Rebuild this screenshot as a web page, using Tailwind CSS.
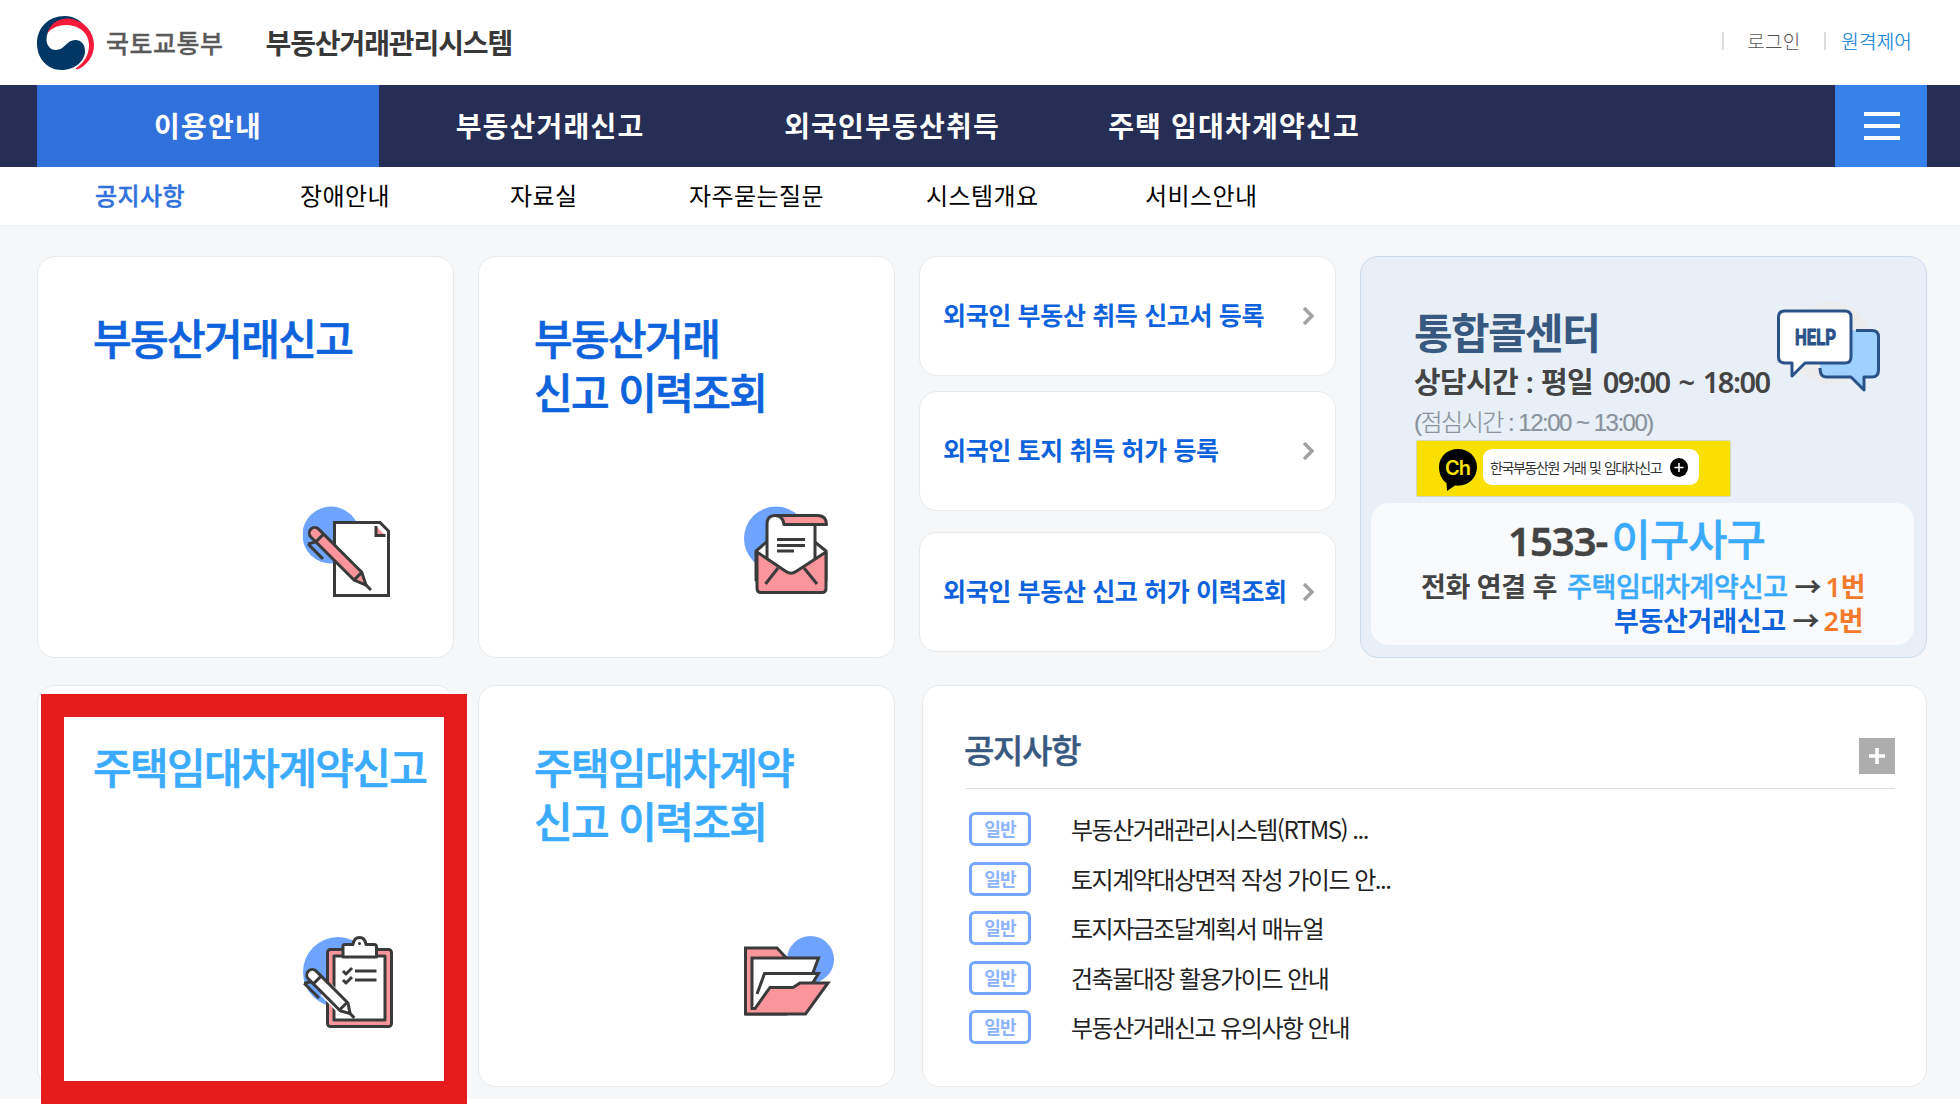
<!DOCTYPE html>
<html lang="ko">
<head>
<meta charset="utf-8">
<title>부동산거래관리시스템</title>
<script src="https://cdn.jsdelivr.net/npm/@tailwindcss/browser@4"></script>
</head>
<body class="bg-white font-['Noto_Sans_CJK_KR',sans-serif] w-[1960px] h-[1104px] overflow-hidden whitespace-nowrap">

<header class="h-[85px] flex items-start pl-[37px] pr-[48px]">
  <svg class="mt-[16px] w-[57px] h-[54px] shrink-0" viewBox="37 16 57 54" preserveAspectRatio="none">
    <path d="M65 16C48 16 37 28 37 43.500S48 70 61.500 70C76 70 85 60 85 51C85 44 81 40 75.500 40C66 40 65 50 56 50C50 50 46.500 45 46.500 39.500C46.500 29 55 21 66 19.500C74 19 81 23 85.500 27.500C81 20 73 16 65 16Z" fill="#003764"/>
    <path d="M47 34C51 21 61 18 69 18.500C84 20 94 32 94 45C94 56 87 66 77 69.500L75.500 68.500C84 63 89 55 89 45C89 34 80 25 66 25C57 25 50 29 47 34Z" fill="#f5193a"/>
  </svg>
  <span class="ml-[12px] mt-[25px] text-[25px] leading-[34px] font-medium tracking-[0.5px] text-[#5a5a5a] [-webkit-text-stroke:0.3px]">국토교통부</span>
  <h1 class="ml-[42px] mt-[25px] text-[28px] leading-[34px] font-bold tracking-[-1.1px] text-[#383838]">부동산거래관리시스템</h1>
  <div class="ml-auto mt-[28px] flex items-center h-[26px] text-[19px] leading-[26px] font-light tracking-[0.2px]">
    <span class="w-[2px] h-[18px] bg-[#ddd]"></span>
    <a class="ml-[23px] w-[77px] text-[#555]">로그인</a>
    <span class="w-[2px] h-[18px] bg-[#ddd]"></span>
    <a class="ml-[15px] text-[#0c83d3] [-webkit-text-stroke:0.2px]">원격제어</a>
  </div>
</header>

<nav class="h-[82px] bg-[#262e55] pl-[37px] pr-[33px] flex text-white text-[28px] leading-[81px] font-bold tracking-[1.2px] text-center">
  <a class="w-[342px] bg-[#3171dc]">이용안내</a>
  <a class="w-[342px]">부동산거래신고</a>
  <a class="w-[342px]">외국인부동산취득</a>
  <a class="w-[342px]">주택 임대차계약신고</a>
  <button class="ml-auto w-[92px] pl-[1px] bg-[#3482ea] flex flex-col items-center justify-center gap-[7.500px]">
    <span class="w-[36px] h-[4.500px] bg-white"></span>
    <span class="w-[36px] h-[4.500px] bg-white"></span>
    <span class="w-[36px] h-[4.500px] bg-white"></span>
  </button>
</nav>

<div class="h-[59px] border-b border-[#eceef0] pl-[95px] flex text-[24px] leading-[55px] tracking-[0.4px] text-black">
  <a class="w-[205px] text-[#3171dc] font-medium [-webkit-text-stroke:0.4px]">공지사항</a>
  <a class="w-[210px]">장애안내</a>
  <a class="w-[179px]">자료실</a>
  <a class="w-[237px]">자주묻는질문</a>
  <a class="w-[219px]">시스템개요</a>
  <a>서비스안내</a>
</div>

<main class="h-[873px] bg-[#f5f7f9] pl-[37px] pr-[33px] pt-[30px] grid grid-cols-[417px_417px_417px_567px] grid-rows-[402px_402px] gap-x-[24px] gap-y-[27px]">

  <section class="bg-white border border-[#e8e9eb] rounded-[18px] pl-[55px] pt-[53px] flex flex-col">
    <h2 class="h-[196px] text-[42px] leading-[54px] font-medium [-webkit-text-stroke:0.7px] tracking-[-1.6px] text-[#0e63dc]">부동산거래신고</h2>
    <svg class="ml-[210px] w-[92px] h-[94px]" viewBox="303 506 92 94" fill="none" stroke="#3a3a3a" stroke-width="3">
      <circle cx="331" cy="535" r="28.500" fill="#6ea3ff" stroke="none"/>
      <path d="M334.500 522.500H380L388.500 531V595.500H334.500Z" fill="#fff"/>
      <path d="M376 526V535.500H385.500" fill="#fb959c"/>
      <g transform="translate(313 532) rotate(45)">
        <path d="M6 5H63L75 0L63 -6H2A5.500 5.500 0 0 0 2 5Z" fill="#fb959c"/>
        <path d="M9 -6V5M63 -6V5M75 0H82M9 5L5 12M5 12H26"/>
      </g>
    </svg>
  </section>

  <section class="bg-white border border-[#e8e9eb] rounded-[18px] pl-[55px] pt-[53px] flex flex-col">
    <h2 class="h-[196px] text-[42px] leading-[54px] font-medium [-webkit-text-stroke:0.7px] tracking-[-1.6px] text-[#0e63dc]">부동산거래<br>신고 이력조회</h2>
    <svg class="ml-[210px] w-[88px] h-[92px]" viewBox="744 506 88 92" fill="none" stroke="#3a3a3a" stroke-width="3" stroke-linejoin="round">
      <circle cx="776" cy="538.500" r="32" fill="#6ea3ff" stroke="none"/>
      <path d="M756 551L790 522L826 551V580H756Z" fill="#fff"/>
      <path d="M767 560V524Q767 515.500 775 515.500H815V565L792 576Z" fill="#fff"/>
      <path d="M775 515.500H818Q826.500 516 826.500 524.500H784Q783 515.500 775 515.500Z" fill="#fb959c"/>
      <path d="M757 552L786 571.500Q791 575 796 571.500L826 552V588Q826 592.500 822 592.500H761Q757 592.500 757 588Z" fill="#fb959c"/>
      <path d="M778 568L765.500 584M804 568L817 584M777 539.500H805M777 545.500H805M777 551H794"/>
    </svg>
  </section>

  <div class="flex flex-col text-[25px] leading-[34px] font-bold tracking-[-0.35px] text-[#0e63dc]">
    <a class="h-[120px] bg-white border border-[#e8e9eb] rounded-[18px] pl-[23px] pr-[21px] flex items-center justify-between"><span class="-mt-[4px]">외국인 부동산 취득 신고서 등록</span>
      <svg class="w-[11px] h-[18px]" viewBox="0 0 11 18" fill="none" stroke="#a2a2a2" stroke-width="3.500"><path d="M1 1L9 9L1 17"/></svg></a>
    <a class="mt-[15px] h-[120px] bg-white border border-[#e8e9eb] rounded-[18px] pl-[23px] pr-[21px] flex items-center justify-between"><span class="-mt-[4px]">외국인 토지 취득 허가 등록</span>
      <svg class="w-[11px] h-[18px]" viewBox="0 0 11 18" fill="none" stroke="#a2a2a2" stroke-width="3.500"><path d="M1 1L9 9L1 17"/></svg></a>
    <a class="mt-[21px] h-[120px] bg-white border border-[#e8e9eb] rounded-[18px] pl-[23px] pr-[21px] flex items-center justify-between"><span class="-mt-[4px]">외국인 부동산 신고 허가 이력조회</span>
      <svg class="w-[11px] h-[18px]" viewBox="0 0 11 18" fill="none" stroke="#a2a2a2" stroke-width="3.500"><path d="M1 1L9 9L1 17"/></svg></a>
  </div>

  <section class="bg-[#e8eff7] border border-[#cbdbec] rounded-[18px] px-[10px] pt-[41px]">
    <div class="flex pl-[43px] h-[141px]">
      <div class="w-[362px] pt-[6px]">
        <h2 class="text-[42px] leading-[54px] font-bold tracking-[-1.6px] text-[#38597f]">통합콜센터</h2>
        <p class="pt-[4px] text-[29px] leading-[40px] h-[45px] font-semibold font-['Noto_Sans','Noto_Sans_CJK_KR',sans-serif] tracking-[-0.7px] [word-spacing:1px] text-[#444]">상담시간 : 평일 <span class="ml-[2px] tracking-[-1.5px] [word-spacing:3px]">09:00 ~ 18:00</span></p>
        <p class="pt-[1px] text-[24px] leading-[38px] font-light font-['Liberation_Sans','Noto_Sans_CJK_KR',sans-serif] tracking-[-1.5px] text-[#8a929b] [-webkit-text-stroke:0.2px]">(점심시간 : 12:00 ~ 13:00)</p>
      </div>
      <svg class="w-[106px] h-[96px]" viewBox="1776 298 106 96" stroke="#2a5288" stroke-width="3" stroke-linejoin="round">
        <circle cx="1830" cy="343" r="41.500" fill="#ececec" stroke="none"/>
        <path d="M1820 330H1873Q1878.500 330 1878.500 336V370Q1878.500 377 1872 377H1864L1864 390L1851 377H1826Q1820 377 1820 371Z" fill="#9fd1ff" stroke="none"/>
        <path d="M1856 330.500H1872Q1878.500 330.500 1878.500 337V370Q1878.500 377 1872 377H1864V390L1851 377H1826Q1820 377 1820 368" fill="none"/>
        <path d="M1785 311H1845Q1851 311 1851 317V357Q1851 363 1845 363H1805L1792 376V363H1785Q1778.500 363 1778.500 357V317Q1778.500 311 1785 311Z" fill="#fff"/>
        <text x="1795" y="344.500" font-family="Roboto" font-weight="700" font-size="22" textLength="41" lengthAdjust="spacingAndGlyphs" fill="#2a5288" stroke-width="1">HELP</text>
      </svg>
    </div>
    <div class="ml-[45px] mt-[1px] w-[315px] h-[57px] bg-[#f9e000] border border-[#d5d7bd] rounded-[2px] flex items-start pl-[21px] pt-[8px]">
      <svg class="w-[40px] h-[42px]" viewBox="0 0 40 42"><path d="M20 0C9 0 1 8 1 18C1 25 4 31 8.500 34L9 42L17 36.500C30 38 39 29 39 18C39 8 31 0 20 0Z" fill="#000"/><text x="20" y="26" text-anchor="middle" font-family="Inter" font-weight="600" font-size="20" fill="#f9e000" textLength="26">Ch</text></svg>
      <div class="ml-[5px] w-[216px] h-[36px] rounded-[9px] bg-white flex items-center pl-[7px] text-[14px] leading-[20px] tracking-[-1.4px] [word-spacing:1px] text-[#333]"><span class="w-[180px]">한국부동산원 거래 및 임대차신고</span>
        <svg class="w-[18px] h-[19px]" viewBox="0 0 18 19"><ellipse cx="9" cy="9.500" rx="9" ry="9.500" fill="#000"/><path d="M4.500 9.500H13.500M9 5V14" stroke="#fff" stroke-width="1.500"/></svg></div>
    </div>
    <div class="mt-[6px] h-[142px] w-[543px] rounded-[18px] bg-[#f9fafc] pt-[8px] font-semibold font-['Noto_Sans','Noto_Sans_CJK_KR',sans-serif] text-[#444]">
      <p class="pl-[137px] h-[59px] text-[40px] leading-[58px] tracking-[-1px]"><span class="[-webkit-text-stroke:0.5px]">1533-</span><span class="ml-[4px] text-[43px] tracking-[-1.2px] font-medium text-[#3aabff] [-webkit-text-stroke:0.3px]">이구사구</span></p>
      <p class="pl-[50px] h-[34px] text-[27px] leading-[34px] tracking-[-0.3px]">전화 연결 후 <span class="ml-[3px] font-medium text-[#3aabff] [-webkit-text-stroke:0.5px]">주택임대차계약신고</span> <span class="tracking-[-1.5px]">→ </span><span class="text-[#f47b2c]">1번</span></p>
      <p class="pl-[243px] h-[34px] text-[27px] leading-[34px] tracking-[-0.3px]"><span class="text-[#0e63dc]">부동산거래신고</span> <span class="tracking-[-1.5px]">→ </span><span class="text-[#f47b2c]">2번</span></p>
    </div>
  </section>

  <section class="relative bg-white border border-[#e8e9eb] rounded-[18px] pl-[55px] pt-[53px] flex flex-col">
    <h2 class="h-[197px] text-[42px] leading-[54px] font-medium [-webkit-text-stroke:0.7px] tracking-[-1.6px] text-[#3aabff]">주택임대차계약신고</h2>
    <svg class="ml-[210px] w-[92px] h-[94px]" viewBox="303 936 92 94" fill="none" stroke="#3a3a3a" stroke-width="3" stroke-linejoin="round">
      <circle cx="338" cy="972" r="35" fill="#6ea3ff" stroke="none"/>
      <rect x="327.500" y="949.500" width="64" height="77" rx="3" fill="#fb959c"/>
      <rect x="334" y="956" width="51" height="64" fill="#fff"/>
      <path d="M343 957V946Q343 944.500 345 944.500H353Q354 937.500 359.500 937.500T366 944.500H374Q376.500 944.500 376.500 947V957Z" fill="#fff"/>
      <circle cx="359.500" cy="943.500" r="1.500" fill="#3a3a3a" stroke="none"/>
      <path d="M355 971H376.500M355 980H376.500"/>
      <path d="M343 971L346 974L352 968M343 980L346 983L352 977"/>
      <g transform="translate(310.500 974) rotate(45)">
        <path d="M22 8H47L60 0L47 -8H22Z" fill="#fff" stroke="none"/>
        <path d="M4 5H47L56 0L47 -6H2A5.500 5.500 0 0 0 2 5Z" fill="#fff"/>
        <path d="M9 -6V5M46 -6V5M56 0H62M6 5L2 11M2 11H23"/>
      </g>
    </svg>
    <div class="absolute left-[3px] top-[8px] w-[426px] h-[410px] border-[23px] border-[#e61c1c]"></div>
  </section>

  <section class="bg-white border border-[#e8e9eb] rounded-[18px] pl-[55px] pt-[53px] flex flex-col">
    <h2 class="h-[197px] text-[42px] leading-[54px] font-medium [-webkit-text-stroke:0.7px] tracking-[-1.6px] text-[#3aabff]">주택임대차계약<br>신고 이력조회</h2>
    <svg class="ml-[210px] w-[92px] h-[94px]" viewBox="744 936 92 94" fill="none" stroke="#3a3a3a" stroke-width="3">
      <circle cx="810.500" cy="959.500" r="23.500" fill="#6ea3ff" stroke="none"/>
      <path d="M745.500 948H777L786 957.500V1014H745.500Z" fill="#fb959c"/>
      <path d="M752 1008.500V958H818.500L811 978L800 985L756 1009Z" fill="#fff"/>
      <path d="M764.500 973.500H818.500L812 984L775 990L753 1008L757 994Z" fill="#fff" stroke="none"/>
      <path d="M757 994L764.500 973.500H818.500L812 984"/>
      <path d="M746 1014H805.500L828.500 983H800L793 987.500H770L755 1008.500H752Z" fill="#fb959c" stroke="none"/>
      <path d="M745.500 1014H805.500L828 983H800L793 987.500H770L755 1008.500H751"/>
    </svg>
  </section>

  <section class="col-span-2 ml-[3px] bg-white border border-[#e8e9eb] rounded-[18px] pl-[43px] pr-[31px] pt-[46px]">
    <div class="h-[57px] border-b border-[#ddd] flex justify-between items-start">
      <h3 class="-ml-[2px] -mt-[1px] text-[33px] leading-[36px] font-medium [-webkit-text-stroke:0.4px] tracking-[-1.3px] text-[#38597f]">공지사항</h3>
      <button class="mt-[6px] w-[36px] h-[36px] bg-[#adadad] flex items-center justify-center"><svg class="w-[16px] h-[16px]" viewBox="0 0 16 16" stroke="#fff" stroke-width="3.500"><path d="M0 8H16M8 0V16"/></svg></button>
    </div>
    <ul class="pt-[15.500px] text-[24px] leading-[49.500px] tracking-[-1.5px] text-[#222]">
      <li class="h-[49.500px] flex items-center pl-[3px]"><span class="w-[62px] h-[34px] mr-[40px] border-3 border-[#74a5ff] rounded-[6px] text-center text-[18px] leading-[26px] font-bold text-[#8cb4ff] tracking-[-0.9px]">일반</span><span class="-mt-[2px]">부동산거래관리시스템(RTMS) ...</span></li>
      <li class="h-[49.500px] flex items-center pl-[3px]"><span class="w-[62px] h-[34px] mr-[40px] border-3 border-[#74a5ff] rounded-[6px] text-center text-[18px] leading-[26px] font-bold text-[#8cb4ff] tracking-[-0.9px]">일반</span><span class="-mt-[1px]">토지계약대상면적 작성 가이드 안...</span></li>
      <li class="h-[49.500px] flex items-center pl-[3px]"><span class="w-[62px] h-[34px] mr-[40px] border-3 border-[#74a5ff] rounded-[6px] text-center text-[18px] leading-[26px] font-bold text-[#8cb4ff] tracking-[-0.9px]">일반</span><span class="-mt-[2px]">토지자금조달계획서 매뉴얼</span></li>
      <li class="h-[49.500px] flex items-center pl-[3px]"><span class="w-[62px] h-[34px] mr-[40px] border-3 border-[#74a5ff] rounded-[6px] text-center text-[18px] leading-[26px] font-bold text-[#8cb4ff] tracking-[-0.9px]">일반</span><span class="-mt-[1px]">건축물대장 활용가이드 안내</span></li>
      <li class="h-[49.500px] flex items-center pl-[3px]"><span class="w-[62px] h-[34px] mr-[40px] border-3 border-[#74a5ff] rounded-[6px] text-center text-[18px] leading-[26px] font-bold text-[#8cb4ff] tracking-[-0.9px]">일반</span><span class="-mt-[2px]">부동산거래신고 유의사항 안내</span></li>
    </ul>
  </section>
</main>
</body>
</html>
